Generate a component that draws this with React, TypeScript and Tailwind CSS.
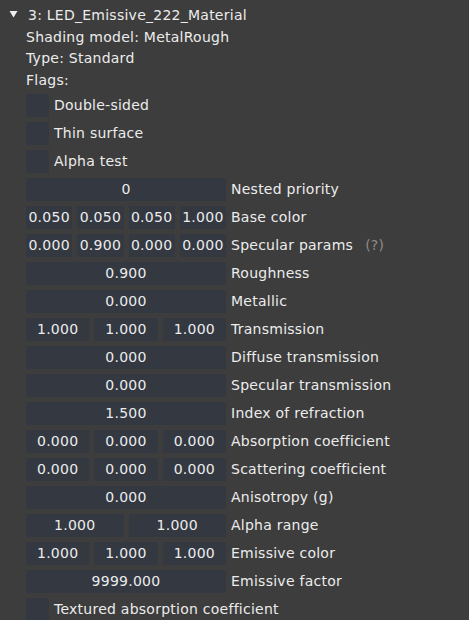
type Prop = { values: string[]; label: string; help?: boolean };

const props: Prop[] = [
  { values: ["0"], label: "Nested priority" },
  { values: ["0.050", "0.050", "0.050", "1.000"], label: "Base color" },
  { values: ["0.000", "0.900", "0.000", "0.000"], label: "Specular params", help: true },
  { values: ["0.900"], label: "Roughness" },
  { values: ["0.000"], label: "Metallic" },
  { values: ["1.000", "1.000", "1.000"], label: "Transmission" },
  { values: ["0.000"], label: "Diffuse transmission" },
  { values: ["0.000"], label: "Specular transmission" },
  { values: ["1.500"], label: "Index of refraction" },
  { values: ["0.000", "0.000", "0.000"], label: "Absorption coefficient" },
  { values: ["0.000", "0.000", "0.000"], label: "Scattering coefficient" },
  { values: ["0.000"], label: "Anisotropy (g)" },
  { values: ["1.000", "1.000"], label: "Alpha range" },
  { values: ["1.000", "1.000", "1.000"], label: "Emissive color" },
  { values: ["9999.000"], label: "Emissive factor" },
];

function Checkbox({ label }: { label: string }) {
  return (
    <div className="mt-[5px] flex h-[23px] items-center">
      <div className="h-[23px] w-[23px] bg-[#333841]" />
      <span className="ml-[5px]">{label}</span>
    </div>
  );
}

function PropRow({ prop }: { prop: Prop }) {
  return (
    <div className="mt-[5px] flex h-[23px] items-center">
      <div className="flex w-[200px] gap-[5px]">
        {prop.values.map((v, i) => (
          <div
            key={i}
            className="flex h-[23px] flex-1 items-center justify-center bg-[#333841] text-[#ececec]"
          >
            {v}
          </div>
        ))}
      </div>
      <span className="ml-[5px]">{prop.label}</span>
      {prop.help && <span className="ml-[12px] text-[#8c8c8c]">(?)</span>}
    </div>
  );
}

export default function App() {
  return (
    <div
      className="h-[620px] w-[469px] overflow-hidden bg-[#3d3d3d] pt-[7px] text-[14px] leading-[16.7px] tracking-[0.25px] text-[#ececec]"
      style={{ fontFamily: '"DejaVu Sans", sans-serif' }}
    >
      <div className="flex items-center">
        <svg width="28" height="16" viewBox="0 0 28 16" className="shrink-0">
          <polygon points="9.5,4 17.5,4 13.5,10.5" fill="#f0f0f0" />
        </svg>
        <span>3: LED_Emissive_222_Material</span>
      </div>
      <div className="pl-[26px]">
        <div className="mt-[5px]">Shading model: MetalRough</div>
        <div className="mt-[5px]">Type: Standard</div>
        <div className="mt-[5px]">Flags:</div>
        <Checkbox label="Double-sided" />
        <Checkbox label="Thin surface" />
        <Checkbox label="Alpha test" />
        {props.map((p) => (
          <PropRow key={p.label} prop={p} />
        ))}
        <Checkbox label="Textured absorption coefficient" />
      </div>
    </div>
  );
}
